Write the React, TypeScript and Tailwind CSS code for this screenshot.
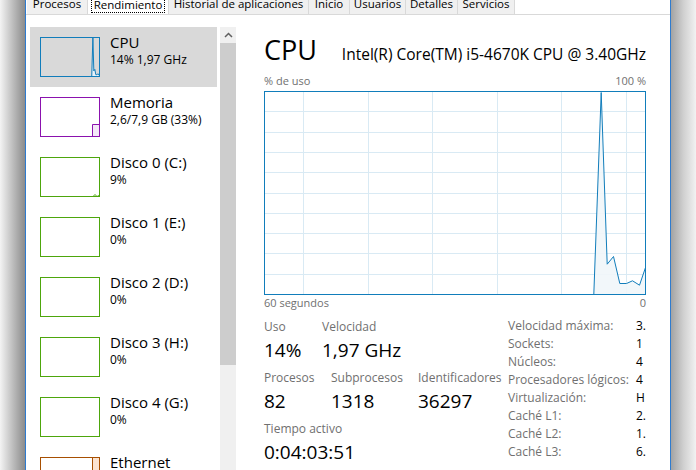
import React from "react";

const tabs = [
  { label: "Procesos", w: "w-[61px]" },
  { label: "Rendimiento", w: "w-[81px]", active: true },
  { label: "Historial de aplicaciones", w: "w-[140px]" },
  { label: "Inicio", w: "w-[41px]" },
  { label: "Usuarios", w: "w-[56px]" },
  { label: "Detalles", w: "w-[52px]" },
  { label: "Servicios", w: "w-[57px]" },
];

type Item = {
  title: string;
  sub: string;
  color: string;
  kind: "cpu" | "mem" | "disk" | "disk0" | "net";
  selected?: boolean;
};

const items: Item[] = [
  { title: "CPU", sub: "14% 1,97 GHz", color: "#117dbb", kind: "cpu", selected: true },
  { title: "Memoria", sub: "2,6/7,9 GB (33%)", color: "#8b12ae", kind: "mem" },
  { title: "Disco 0 (C:)", sub: "9%", color: "#4da60c", kind: "disk0" },
  { title: "Disco 1 (E:)", sub: "0%", color: "#4da60c", kind: "disk" },
  { title: "Disco 2 (D:)", sub: "0%", color: "#4da60c", kind: "disk" },
  { title: "Disco 3 (H:)", sub: "0%", color: "#4da60c", kind: "disk" },
  { title: "Disco 4 (G:)", sub: "0%", color: "#4da60c", kind: "disk" },
  { title: "Ethernet", sub: "", color: "#a74f01", kind: "net" },
];

const specs = [
  ["Velocidad máxima:", "3."],
  ["Sockets:", "1"],
  ["Núcleos:", "4"],
  ["Procesadores lógicos:", "4"],
  ["Virtualización:", "H"],
  ["Caché L1:", "2."],
  ["Caché L2:", "1."],
  ["Caché L3:", "6."],
];

// cpu history, x in px over a 382x204 box
const cpuPts: [number, number][] = [
  [0, 203],
  [329.3, 203],
  [336.7, 1],
  [342.7, 172.7],
  [349, 165],
  [355.3, 192],
  [362, 192],
  [368, 189.3],
  [375, 193.7],
  [381, 176],
];

const Thumb = ({ item }: { item: Item }) => {
  const c = item.color;
  const mini = cpuPts.map(([x, y]) => `${(x * 60) / 382},${(y * 40) / 204}`).join(" ");
  return (
    <svg width="60" height="40" className="block shrink-0">
      {item.kind === "cpu" && (
        <>
          <polygon points={mini + " 60,40"} fill="#e8f2f9" />
          <polyline points={mini} fill="none" stroke={c} strokeWidth="1" />
        </>
      )}
      {item.kind === "mem" && (
        <path d="M52.5 40 V27.5 H60 V40 Z" fill="#f4e8f8" stroke={c} strokeWidth="1" />
      )}
      {item.kind === "disk0" && (
        <polyline points="53,39.5 55,37.5 57,39.5 59,38.5" fill="none" stroke={c} strokeWidth="1" />
      )}
      {item.kind === "net" && (
        <path d="M52.5 40 V0 H60 V40 Z" fill="#fce3d0" stroke={c} strokeWidth="1" />
      )}
      <rect x="0.5" y="0.5" width="59" height="39" fill="none" stroke={c} strokeWidth="1" />
    </svg>
  );
};

const Graph = () => {
  const pts = cpuPts.map(([x, y]) => `${x + 0.5},${y + 0.5}`).join(" ");
  const vx = [39, 103.5, 168, 232.5, 297, 361.5];
  return (
    <svg width="382" height="204" className="block">
      <rect x="0" y="0" width="382" height="204" fill="#fff" />
      {Array.from({ length: 9 }).map((_, i) => (
        <line key={"h" + i} x1="0" x2="382" y1={Math.round((i + 1) * 20.3) + 0.5} y2={Math.round((i + 1) * 20.3) + 0.5} stroke="#d9eaf4" />
      ))}
      {vx.map((x) => (
        <line key={"v" + x} x1={Math.round(x) + 0.5} x2={Math.round(x) + 0.5} y1="0" y2="204" stroke="#d9eaf4" />
      ))}
      <polygon points={pts + " 381.5,203.5"} fill="#f1f6fa" fillOpacity="0.9" />
      <polyline points={pts} fill="none" stroke="#117dbb" strokeWidth="1" />
      <rect x="0.5" y="0.5" width="381" height="203" fill="none" stroke="#117dbb" />
    </svg>
  );
};

const Stat = ({ label, value, w }: { label: string; value: string; w?: string }) => (
  <div className={w}>
    <div className="h-[16px] text-[12px] leading-[16px] text-[#707070]">{label}</div>
    <div className="h-[30px] text-[19px] leading-[30px] text-black">{value}</div>
  </div>
);

export default function App() {
  return (
    <div
      className="flex w-[696px] h-[470px] overflow-hidden bg-white"
      style={{ fontFamily: '"Open Sans", "Noto Sans", sans-serif' }}
    >
      <div className="w-[25px] shrink-0 bg-gradient-to-r from-[#f4f4f4] to-[#8c8c8c]" />

      <div className="flex w-[646px] shrink-0 flex-col border-x border-[#2e7bcf] bg-white">
        {/* tabs */}
        <div className="h-[15px] shrink-0 overflow-hidden border-b border-[#d9d9d9]">
          <div className="mt-[-4px] flex pl-[1px]">
            {tabs.map((t) => (
              <div
                key={t.label}
                className={`${t.w} flex h-[20px] shrink-0 justify-center border-r border-[#d9d9d9] text-[11.5px] leading-[16px] text-black ${
                  t.active ? "bg-white" : "bg-[#f0f0f0]"
                }`}
              >
                {t.active ? (
                  <span className="h-[17px] border border-dotted border-black px-[2px] leading-[15px]">{t.label}</span>
                ) : (
                  t.label
                )}
              </div>
            ))}
          </div>
        </div>

        <div className="flex min-h-0 flex-1">
          {/* left list */}
          <div className="flex w-[212px] shrink-0 pt-[12px] pl-[4px]">
            <div className="w-[187px] shrink-0">
              {items.map((it) => (
                <div key={it.title} className={`flex h-[60px] ${it.selected ? "bg-[#d9d9d9]" : ""}`}>
                  <div className="ml-[10px] mt-[10px]">
                    <Thumb item={it} />
                  </div>
                  <div className="ml-[10px] pt-[5px] text-black">
                    <div className="text-[15px] leading-[20px]">{it.title}</div>
                    <div className="text-[12px] leading-[15px]">{it.sub}</div>
                  </div>
                </div>
              ))}
            </div>
            <div className="ml-[3px] flex w-[16px] shrink-0 flex-col bg-[#f0f0f0]">
              <div className="flex h-[16px] items-center justify-center">
                <svg width="9" height="6" viewBox="0 0 9 6">
                  <polyline points="1,5 4.5,1.5 8,5" fill="none" stroke="#606060" strokeWidth="1.5" />
                </svg>
              </div>
              <div className="h-[322px] bg-[#cdcdcd]" />
            </div>
          </div>

          {/* right pane */}
          <div className="flex w-[432px] shrink-0 flex-col pl-[26px] pr-[24px] pt-[21px]">
            <div className="flex items-baseline justify-between">
              <span className="text-[27px] leading-[28px] text-black">CPU</span>
              <span className="text-[15.5px] text-black">Intel(R) Core(TM) i5-4670K CPU @ 3.40GHz</span>
            </div>
            <div className="mt-[7px] flex justify-between text-[11px] leading-[16px] text-[#707070]">
              <span>% de uso</span>
              <span>100 %</span>
            </div>
            <div className="mt-[2px]">
              <Graph />
            </div>
            <div className="flex justify-between text-[11px] leading-[16px] text-[#707070]">
              <span>60 segundos</span>
              <span>0</span>
            </div>

            <div className="mt-[8px] flex">
              <div className="w-[244px] shrink-0">
                <div className="flex">
                  <Stat label="Uso" value="14%" w="w-[58px]" />
                  <Stat label="Velocidad" value="1,97 GHz" />
                </div>
                <div className="mt-[5px] flex">
                  <Stat label="Procesos" value="82" w="w-[67px]" />
                  <Stat label="Subprocesos" value="1318" w="w-[87px]" />
                  <Stat label="Identificadores" value="36297" />
                </div>
                <div className="mt-[5px]">
                  <Stat label="Tiempo activo" value="0:04:03:51" />
                </div>
              </div>
              <div className="-mt-[2px] flex-1">
                {specs.map(([k, v]) => (
                  <div key={k} className="flex h-[18px] text-[12px] leading-[18px]">
                    <span className="w-[128px] shrink-0 text-[#707070]">{k}</span>
                    <span className="text-black">{v}</span>
                  </div>
                ))}
              </div>
            </div>
          </div>
        </div>
      </div>

      <div className="w-[25px] shrink-0 bg-gradient-to-r from-[#a3a3a3] via-[#d0d0d0] to-[#f2f2f2]" />
    </div>
  );
}
